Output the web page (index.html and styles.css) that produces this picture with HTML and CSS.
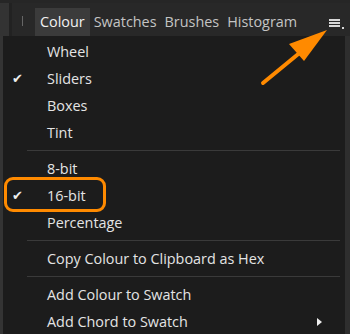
FILE: index.html
```html
<!DOCTYPE html>
<html lang="en">
<head>
    <meta charset="UTF-8">
    <title>Colour panel menu</title>
    <link rel="stylesheet" href="styles.css">
</head>
<body>
    <div class="panel">
        <div class="tabbar">
            <div class="stub"></div>
            <div class="tabs">
                <span class="grip"></span>
                <span class="tab active">Colour</span>
                <span class="tab">Swatches</span>
                <span class="tab">Brushes</span>
                <span class="tab">Histogram</span>
                <span class="burger">
                    <svg width="16" height="12" viewBox="0 0 16 12">
                        <rect x="0" y="1" width="11" height="2" fill="#d8d8d8"/>
                        <rect x="0" y="4" width="11" height="2" fill="#d8d8d8"/>
                        <rect x="0" y="7" width="11" height="2" fill="#d8d8d8"/>
                        <rect x="13" y="9" width="2" height="2" fill="#d8d8d8"/>
                    </svg>
                </span>
            </div>
        </div>

        <div class="body">
            <div class="edge"></div>
            <ul class="menu">
                <li>Wheel</li>
                <li class="checked">Sliders</li>
                <li>Boxes</li>
                <li>Tint</li>
                <li class="sep"></li>
                <li>8-bit</li>
                <li class="checked">16-bit</li>
                <li>Percentage</li>
                <li class="sep"></li>
                <li>Copy Colour to Clipboard as Hex</li>
                <li class="sep"></li>
                <li>Add Colour to Swatch</li>
                <li class="sub">Add Chord to Swatch</li>
            </ul>
            <div class="edge right"></div>
        </div>

        <div class="highlight"></div>
        <svg class="pointer" width="80" height="70" viewBox="0 0 80 70">
            <line x1="5" y1="61" x2="50" y2="24" stroke="#ff8a00" stroke-width="4" stroke-linecap="round"/>
            <polygon points="69,8 31,22 46,39" fill="#ff8a00"/>
        </svg>
    </div>
</body>
</html>
```

FILE: styles.css
```css
body {
    margin: 0;
    background: #1c1c1c;
    font-family: "Open Sans", "Noto Sans", sans-serif;
    font-size: 14.4px;
}

.panel {
    position: relative;
    width: 350px;
    height: 334px;
    overflow: hidden;
    display: flex;
    flex-direction: column;
}

.tabbar {
    display: flex;
    height: 36px;
    background: #222;
    border-top: 3px solid #262626;
    box-sizing: border-box;
}

.stub {
    width: 9px;
    background: #333;
    margin-right: 3px;
}

.tabs {
    flex: 1;
    display: flex;
    align-items: stretch;
    background: #282828;
    padding-top: 5px;
}

.grip {
    width: 1px;
    height: 10px;
    background: #666;
    margin: 8px 12px 0 10px;
}

.tab {
    padding: 0 4px;
    color: #c4c4c4;
    line-height: 28px;
}

.tab.active {
    background: #3b3b3b;
    color: #f2f2f2;
    padding: 0 5px;
}

.burger {
    margin-left: auto;
    margin-right: 5px;
    padding-top: 7px;
}

.body {
    flex: 1;
    display: flex;
}

.edge {
    width: 3px;
    background: #343434;
}

.edge.right {
    width: 5px;
    background: #2e2e2e;
}

.menu {
    flex: 1;
    list-style: none;
    margin: 0;
    padding: 2px 0 0;
    color: #e4e4e4;
}

.menu li {
    position: relative;
    height: 27px;
    line-height: 27px;
    padding-left: 44px;
}

.menu li.checked::before {
    content: "\2714";
    position: absolute;
    left: 9px;
    font-size: 13px;
    color: #eee;
}

.menu li.sep {
    height: 0;
    border-top: 1px solid #3a3a3a;
    margin: 4px 5px 4px 24px;
    padding: 0;
}

.menu li.sub::after {
    content: "";
    position: absolute;
    left: 314px;
    top: 10px;
    border-left: 5px solid #eee;
    border-top: 4px solid transparent;
    border-bottom: 4px solid transparent;
}

.highlight {
    position: absolute;
    left: 4px;
    top: 177px;
    width: 96px;
    height: 29px;
    border: 3px solid #ff8a00;
    border-radius: 9px;
}

.pointer {
    position: absolute;
    left: 258px;
    top: 22px;
}
```
